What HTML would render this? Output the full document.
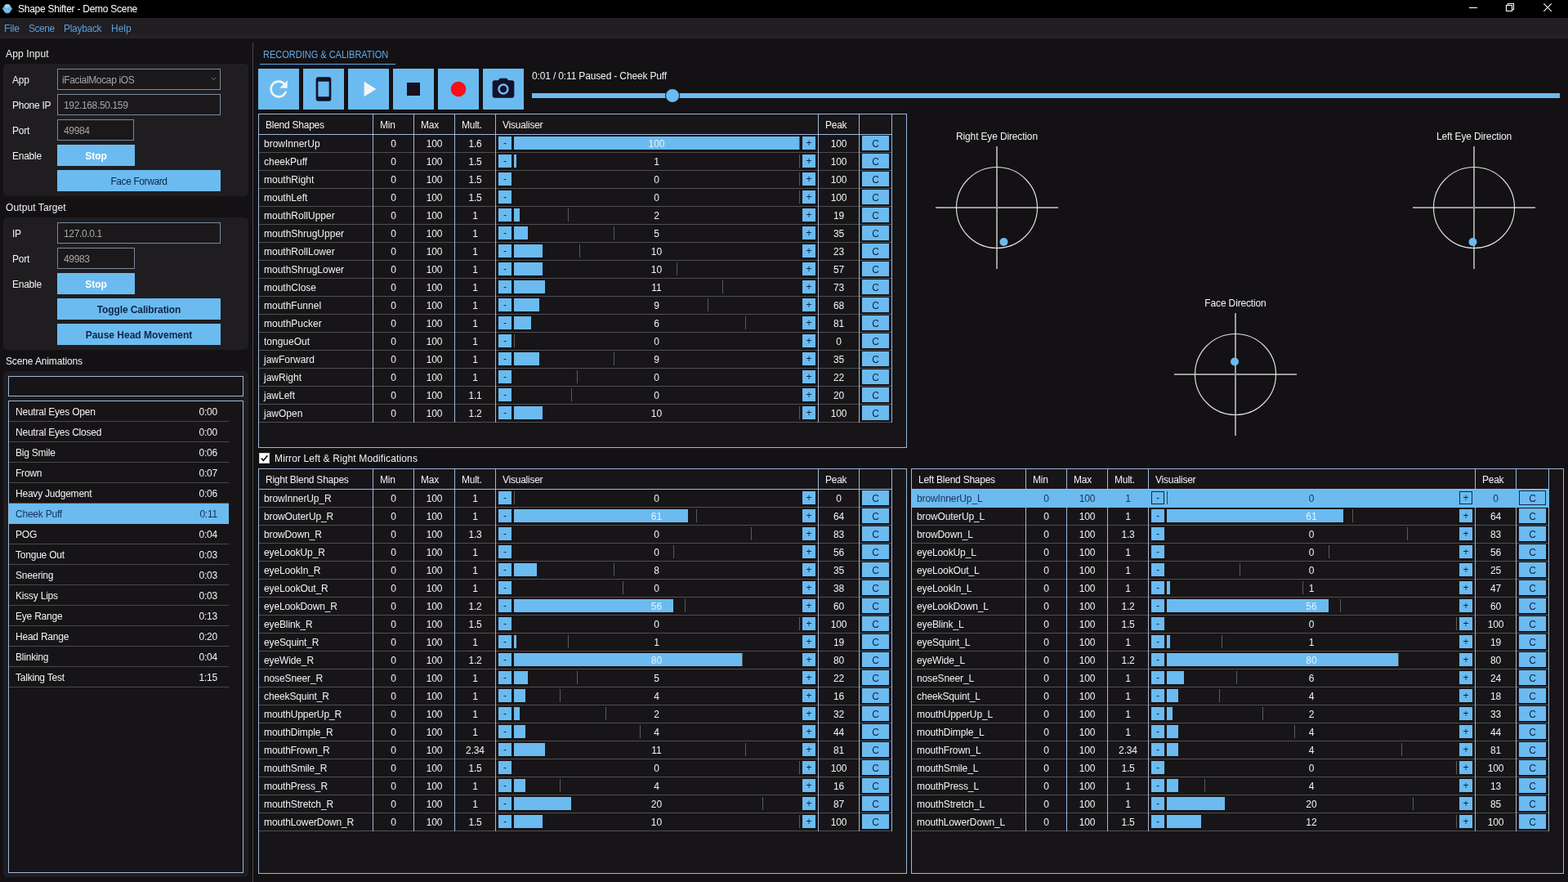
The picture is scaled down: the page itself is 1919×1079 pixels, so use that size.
<!DOCTYPE html>
<html lang="en"><head><meta charset="utf-8"><title>Shape Shifter - Demo Scene</title>
<style>
*{box-sizing:border-box;margin:0;padding:0}
html,body{width:1919px;height:1079px;overflow:hidden;background:#131114}
body{position:relative;font-family:"Liberation Sans",sans-serif;font-size:12px;color:#f2f2f2;line-height:14px}
#app{position:absolute;left:0;top:0;width:1919px;height:1079px;will-change:transform}
.abs{position:absolute}
div.t{position:absolute;white-space:nowrap;line-height:14px}
.panel{position:absolute;background:#1f1d20;border-radius:5px}
.inp{position:absolute;border:1px solid #7a899c;background:#1a181b;color:#a6a6a6;letter-spacing:-0.35px;line-height:26px;padding-left:7px;white-space:nowrap}
.btn{position:absolute;background:#6bbbf0;color:#10254a;text-align:center;line-height:28px;white-space:nowrap}
.btn.w{color:#fff;font-weight:bold}
.btn.bd{font-weight:bold}
.tb{position:absolute;top:84px;width:50px;height:50px;background:#6bbbf0}
.tb svg{position:absolute;left:9px;top:9px}
.grid{position:absolute;border:1px solid #9cb8db;background:#171518;overflow:hidden}
.hr,.r{display:flex;white-space:nowrap}
.hr{height:25px;border-bottom:1px solid #9cb8db;width:max-content}
.r{height:22px;width:max-content}
.c{border-right:1px solid #9cb8db;height:100%;flex:none;position:relative}
.hr .c{line-height:27px;padding-left:8px;letter-spacing:-0.25px}
.r .c{line-height:23px;text-align:center;box-shadow:inset 0 -1px 0 #4f4e51}
.sel .c{box-shadow:none!important}
.cn{width:140px}
.r .cn{text-align:left;padding-left:6px}
.c50{width:50px;letter-spacing:-0.15px}
.c40{width:40px}
.hr .c50{padding-left:8px}
.v b,.v i,.v span{position:absolute;top:2px;height:16px}
.v b{width:16px;background:#6bbbf0;color:#10254a;font-weight:normal;line-height:17px;text-align:center}
.m{left:3px}
.pl{right:3px}
.b{left:22px;background:#6bbbf0}
.p{width:1px;background:#5a5a5c}
.v span{left:22px;line-height:19px;text-align:center}
.v span.on{color:#e8f3fc}
.cb{position:absolute;left:3px;top:1px;width:33px;height:18px;background:#6bbbf0;color:#10254a;font-weight:normal;line-height:21px;text-align:center}
.sel{background:#6bbbf0;color:#173058}
.sel .c{border-right-color:#6bbbf0}
.sel .v b,.sel .cb{background:transparent;border:1px solid #14274a}
.sel .v b{line-height:15px}
.sel .cb{line-height:19px}
.sel .p{background:#2a4468}
.glabel{position:absolute;width:200px;text-align:center;line-height:16px;white-space:nowrap;letter-spacing:-0.15px}
.li{position:absolute;left:11px;width:269px;height:25px;border-bottom:1px solid #48484a;line-height:27px;white-space:nowrap;letter-spacing:-0.22px}
.li span{position:absolute;left:8px}
.li em{position:absolute;right:14px;font-style:normal}
.li.s{background:#6bbbf0;color:#173058;border-bottom-color:#6bbbf0}
</style></head><body><div id="app">
<div class="abs" style="left:0;top:0;width:1919px;height:22px;background:#000"></div>
<svg class="abs" style="left:2px;top:4px" width="14" height="13" viewBox="0 0 14 13"><defs><radialGradient id="ig" cx="0.45" cy="0.35" r="0.7"><stop offset="0" stop-color="#a8d8f4"/><stop offset="1" stop-color="#5aa9dc"/></radialGradient></defs><ellipse cx="7" cy="6.8" rx="5" ry="5.6" fill="url(#ig)"/><rect x="1" y="5.5" width="12" height="2.6" rx="1.3" fill="#6fb4df"/><rect x="4.3" y="1.6" width="5.4" height="1.2" fill="#d9eefb"/></svg>
<div class="t" style="left:22px;top:4px;color:#fff;letter-spacing:-0.26px">Shape Shifter - Demo Scene</div>
<svg class="abs" style="left:1790px;top:0" width="129" height="22" viewBox="0 0 129 22"><g stroke="#fff" stroke-width="1.1" fill="none"><path d="M8 9.5H18"/><path d="M53.5 6.5h7v7h-7z" /><path d="M55.5 6.5v-2h7v7h-2"/><path d="M99.3 4.3l9.5 9.5M108.8 4.3l-9.5 9.5"/></g></svg>
<div class="abs" style="left:0;top:22px;width:1919px;height:25px;background:#201e21"></div>
<div class="abs" style="left:0;top:42px;width:1919px;height:5px;background:#242225"></div>
<div class="t" style="left:5px;top:28px;color:#5a9fdc;letter-spacing:-0.1px">File</div>
<div class="t" style="left:35px;top:28px;color:#5a9fdc;letter-spacing:-0.45px">Scene</div>
<div class="t" style="left:78px;top:28px;color:#5a9fdc;letter-spacing:-0.3px">Playback</div>
<div class="t" style="left:136px;top:28px;color:#5a9fdc;letter-spacing:0px">Help</div>
<div class="t" style="left:7px;top:59px;letter-spacing:0.15px">App Input</div>
<div class="panel" style="left:4px;top:78px;width:300px;height:162px"></div>
<div class="t" style="left:15px;top:91px;letter-spacing:-0.25px">App</div>
<div class="t" style="left:15px;top:122px;letter-spacing:-0.25px">Phone IP</div>
<div class="t" style="left:15px;top:153px;letter-spacing:-0.25px">Port</div>
<div class="t" style="left:15px;top:184px;letter-spacing:-0.25px">Enable</div>
<div class="inp" style="left:70px;top:84px;width:200px;height:26px;padding-left:5px">iFacialMocap iOS<svg class="abs" style="left:187px;top:9px" width="7" height="5" viewBox="0 0 7 5"><path d="M0.8 0.8l2.7 3 2.7-3" stroke="#747478" fill="none" stroke-width="1"/></svg></div>
<div class="inp" style="left:70px;top:115px;width:200px;height:26px">192.168.50.159</div>
<div class="inp" style="left:70px;top:146px;width:94px;height:26px">49984</div>
<div class="btn w" style="left:70px;top:177px;width:95px;height:26px">Stop</div>
<div class="btn" style="left:70px;top:208px;width:200px;height:26px;letter-spacing:-0.4px">Face Forward</div>
<div class="t" style="left:7px;top:247px;letter-spacing:0.1px">Output Target</div>
<div class="panel" style="left:4px;top:266px;width:300px;height:162px"></div>
<div class="t" style="left:15px;top:279px;letter-spacing:-0.25px">IP</div>
<div class="t" style="left:15px;top:310px;letter-spacing:-0.25px">Port</div>
<div class="t" style="left:15px;top:341px;letter-spacing:-0.25px">Enable</div>
<div class="inp" style="left:70px;top:272px;width:200px;height:26px">127.0.0.1</div>
<div class="inp" style="left:70px;top:303px;width:95px;height:26px">49983</div>
<div class="btn w" style="left:70px;top:334px;width:95px;height:26px">Stop</div>
<div class="btn bd" style="left:70px;top:365px;width:200px;height:26px;letter-spacing:-0.11px">Toggle Calibration</div>
<div class="btn bd" style="left:70px;top:396px;width:200px;height:26px">Pause Head Movement</div>
<div class="t" style="left:7px;top:435px;letter-spacing:-0.13px">Scene Animations</div>
<div class="panel" style="left:4px;top:454px;width:300px;height:619px"></div>
<div class="abs" style="left:10px;top:460px;width:288px;height:25px;border:1px solid #9cb8db;background:#161417"></div>
<div class="abs" style="left:10px;top:490px;width:288px;height:578px;border:1px solid #9cb8db;background:#161417"></div>
<div class="li" style="top:491px"><span>Neutral Eyes Open</span><em>0:00</em></div>
<div class="li" style="top:516px"><span>Neutral Eyes Closed</span><em>0:00</em></div>
<div class="li" style="top:541px"><span>Big Smile</span><em>0:06</em></div>
<div class="li" style="top:566px"><span>Frown</span><em>0:07</em></div>
<div class="li" style="top:591px"><span>Heavy Judgement</span><em>0:06</em></div>
<div class="li s" style="top:616px"><span>Cheek Puff</span><em>0:11</em></div>
<div class="li" style="top:641px"><span>POG</span><em>0:04</em></div>
<div class="li" style="top:666px"><span>Tongue Out</span><em>0:03</em></div>
<div class="li" style="top:691px"><span>Sneering</span><em>0:03</em></div>
<div class="li" style="top:716px"><span>Kissy Lips</span><em>0:03</em></div>
<div class="li" style="top:741px"><span>Eye Range</span><em>0:13</em></div>
<div class="li" style="top:766px"><span>Head Range</span><em>0:20</em></div>
<div class="li" style="top:791px"><span>Blinking</span><em>0:04</em></div>
<div class="li" style="top:816px"><span>Talking Test</span><em>1:15</em></div>
<div class="abs" style="left:309px;top:52px;width:1px;height:1027px;background:#47474a"></div>
<div class="t" style="left:322px;top:60px;color:#62abe8;font-size:12.6px;transform:scaleX(0.873);transform-origin:0 0">RECORDING &amp; CALIBRATION</div>
<div class="abs" style="left:318px;top:78px;width:166px;height:1px;background:#62abe8"></div>
<div class="tb" style="left:316px"><svg width="32" height="32" viewBox="0 0 24 24"><path fill="#f4f4f4" d="M17.65 6.35C16.2 4.9 14.21 4 12 4c-4.42 0-7.99 3.58-7.99 8s3.57 8 7.99 8c3.73 0 6.84-2.55 7.73-6h-2.08c-.82 2.33-3.04 4-5.65 4-3.31 0-6-2.69-6-6s2.69-6 6-6c1.66 0 3.14.69 4.22 1.78L13 11h7V4l-2.35 2.35z"/></svg></div>
<div class="tb" style="left:371px"><svg width="32" height="32" viewBox="0 0 24 24"><path fill="#15102a" d="M17 1.01L7 1c-1.1 0-2 .9-2 2v18c0 1.1.9 2 2 2h10c1.1 0 2-.9 2-2V3c0-1.1-.9-1.99-2-1.99zM17 19H7V5h10v14z"/></svg></div>
<div class="tb" style="left:426px"><svg width="32" height="32" viewBox="0 0 24 24"><path fill="#f4f4f4" d="M8 5v14l11-7z"/></svg></div>
<div class="tb" style="left:481px"><svg width="32" height="32" viewBox="0 0 24 24"><path fill="#17101f" d="M6 6h12v12H6z"/></svg></div>
<div class="tb" style="left:536px"><svg width="32" height="32" viewBox="0 0 24 24"><circle cx="12" cy="12" r="7" fill="#ff0d14"/></svg></div>
<div class="tb" style="left:591px"><svg width="32" height="32" viewBox="0 0 24 24"><circle cx="12" cy="12" r="3.2" fill="#15102a"/><path fill="#15102a" d="M9 2L7.17 4H4c-1.1 0-2 .9-2 2v12c0 1.1.9 2 2 2h16c1.1 0 2-.9 2-2V6c0-1.1-.9-2-2-2h-3.17L15 2H9zm3 15c-2.76 0-5-2.24-5-5s2.24-5 5-5 5 2.24 5 5-2.24 5-5 5z"/></svg></div>
<div class="t" style="left:651px;top:86px;letter-spacing:-0.15px">0:01 / 0:11 Paused - Cheek Puff</div>
<div class="abs" style="left:651px;top:114px;width:1258px;height:6px;background:#6bbbf0"></div>
<div class="abs" style="left:814px;top:108px;width:18px;height:18px;border-radius:9px;background:#6bbbf0;border:1px solid #131114"></div>
<div class="grid" style="left:316px;top:139px;width:794px;height:409px">
<div class="hr"><div class="c cn">Blend Shapes</div><div class="c c50">Min</div><div class="c c50">Max</div><div class="c c50">Mult.</div><div class="c" style="width:395px">Visualiser</div><div class="c c50">Peak</div><div class="c c40"></div></div>
<div class="r"><div class="c cn">browInnerUp</div><div class="c c50">0</div><div class="c c50">100</div><div class="c c50">1.6</div><div class="c v" style="width:395px"><b class="m">-</b><i class="b" style="width:349px"></i><i class="p" style="left:371px"></i><span class="on" style="width:349px">100</span><b class="pl">+</b></div><div class="c c50">100</div><div class="c c40"><b class="cb">C</b></div></div>
<div class="r"><div class="c cn">cheekPuff</div><div class="c c50">0</div><div class="c c50">100</div><div class="c c50">1.5</div><div class="c v" style="width:395px"><b class="m">-</b><i class="b" style="width:3.49px"></i><i class="p" style="left:371px"></i><span style="width:349px">1</span><b class="pl">+</b></div><div class="c c50">100</div><div class="c c40"><b class="cb">C</b></div></div>
<div class="r"><div class="c cn">mouthRight</div><div class="c c50">0</div><div class="c c50">100</div><div class="c c50">1.5</div><div class="c v" style="width:395px"><b class="m">-</b><i class="p" style="left:371px"></i><span style="width:349px">0</span><b class="pl">+</b></div><div class="c c50">100</div><div class="c c40"><b class="cb">C</b></div></div>
<div class="r"><div class="c cn">mouthLeft</div><div class="c c50">0</div><div class="c c50">100</div><div class="c c50">1.5</div><div class="c v" style="width:395px"><b class="m">-</b><i class="p" style="left:371px"></i><span style="width:349px">0</span><b class="pl">+</b></div><div class="c c50">100</div><div class="c c40"><b class="cb">C</b></div></div>
<div class="r"><div class="c cn">mouthRollUpper</div><div class="c c50">0</div><div class="c c50">100</div><div class="c c50">1</div><div class="c v" style="width:395px"><b class="m">-</b><i class="b" style="width:6.98px"></i><i class="p" style="left:88.31px"></i><span style="width:349px">2</span><b class="pl">+</b></div><div class="c c50">19</div><div class="c c40"><b class="cb">C</b></div></div>
<div class="r"><div class="c cn">mouthShrugUpper</div><div class="c c50">0</div><div class="c c50">100</div><div class="c c50">1</div><div class="c v" style="width:395px"><b class="m">-</b><i class="b" style="width:17.45px"></i><i class="p" style="left:144.15px"></i><span style="width:349px">5</span><b class="pl">+</b></div><div class="c c50">35</div><div class="c c40"><b class="cb">C</b></div></div>
<div class="r"><div class="c cn">mouthRollLower</div><div class="c c50">0</div><div class="c c50">100</div><div class="c c50">1</div><div class="c v" style="width:395px"><b class="m">-</b><i class="b" style="width:34.9px"></i><i class="p" style="left:102.27px"></i><span style="width:349px">10</span><b class="pl">+</b></div><div class="c c50">23</div><div class="c c40"><b class="cb">C</b></div></div>
<div class="r"><div class="c cn">mouthShrugLower</div><div class="c c50">0</div><div class="c c50">100</div><div class="c c50">1</div><div class="c v" style="width:395px"><b class="m">-</b><i class="b" style="width:34.9px"></i><i class="p" style="left:220.93px"></i><span style="width:349px">10</span><b class="pl">+</b></div><div class="c c50">57</div><div class="c c40"><b class="cb">C</b></div></div>
<div class="r"><div class="c cn">mouthClose</div><div class="c c50">0</div><div class="c c50">100</div><div class="c c50">1</div><div class="c v" style="width:395px"><b class="m">-</b><i class="b" style="width:38.39px"></i><i class="p" style="left:276.77px"></i><span style="width:349px">11</span><b class="pl">+</b></div><div class="c c50">73</div><div class="c c40"><b class="cb">C</b></div></div>
<div class="r"><div class="c cn">mouthFunnel</div><div class="c c50">0</div><div class="c c50">100</div><div class="c c50">1</div><div class="c v" style="width:395px"><b class="m">-</b><i class="b" style="width:31.41px"></i><i class="p" style="left:259.32px"></i><span style="width:349px">9</span><b class="pl">+</b></div><div class="c c50">68</div><div class="c c40"><b class="cb">C</b></div></div>
<div class="r"><div class="c cn">mouthPucker</div><div class="c c50">0</div><div class="c c50">100</div><div class="c c50">1</div><div class="c v" style="width:395px"><b class="m">-</b><i class="b" style="width:20.94px"></i><i class="p" style="left:304.69px"></i><span style="width:349px">6</span><b class="pl">+</b></div><div class="c c50">81</div><div class="c c40"><b class="cb">C</b></div></div>
<div class="r"><div class="c cn">tongueOut</div><div class="c c50">0</div><div class="c c50">100</div><div class="c c50">1</div><div class="c v" style="width:395px"><b class="m">-</b><i class="p" style="left:22px"></i><span style="width:349px">0</span><b class="pl">+</b></div><div class="c c50">0</div><div class="c c40"><b class="cb">C</b></div></div>
<div class="r"><div class="c cn">jawForward</div><div class="c c50">0</div><div class="c c50">100</div><div class="c c50">1</div><div class="c v" style="width:395px"><b class="m">-</b><i class="b" style="width:31.41px"></i><i class="p" style="left:144.15px"></i><span style="width:349px">9</span><b class="pl">+</b></div><div class="c c50">35</div><div class="c c40"><b class="cb">C</b></div></div>
<div class="r"><div class="c cn">jawRight</div><div class="c c50">0</div><div class="c c50">100</div><div class="c c50">1</div><div class="c v" style="width:395px"><b class="m">-</b><i class="p" style="left:98.78px"></i><span style="width:349px">0</span><b class="pl">+</b></div><div class="c c50">22</div><div class="c c40"><b class="cb">C</b></div></div>
<div class="r"><div class="c cn">jawLeft</div><div class="c c50">0</div><div class="c c50">100</div><div class="c c50">1.1</div><div class="c v" style="width:395px"><b class="m">-</b><i class="p" style="left:91.8px"></i><span style="width:349px">0</span><b class="pl">+</b></div><div class="c c50">20</div><div class="c c40"><b class="cb">C</b></div></div>
<div class="r"><div class="c cn">jawOpen</div><div class="c c50">0</div><div class="c c50">100</div><div class="c c50">1.2</div><div class="c v" style="width:395px"><b class="m">-</b><i class="b" style="width:34.9px"></i><i class="p" style="left:371px"></i><span style="width:349px">10</span><b class="pl">+</b></div><div class="c c50">100</div><div class="c c40"><b class="cb">C</b></div></div>
</div>
<div class="abs" style="left:317px;top:554px;width:13px;height:13px;background:#fff;border:1px solid #cfcfcf"><svg class="abs" style="left:0;top:0" width="11" height="11" viewBox="0 0 11 11"><path d="M1.8 5.6l2.6 2.8L9.4 2.2" stroke="#15151a" stroke-width="1.7" fill="none"/></svg></div>
<div class="t" style="left:336px;top:554px;letter-spacing:0.13px">Mirror Left &amp; Right Modifications</div>
<div class="grid" style="left:316px;top:573px;width:794px;height:496px">
<div class="hr"><div class="c cn">Right Blend Shapes</div><div class="c c50">Min</div><div class="c c50">Max</div><div class="c c50">Mult.</div><div class="c" style="width:395px">Visualiser</div><div class="c c50">Peak</div><div class="c c40"></div></div>
<div class="r"><div class="c cn" style="letter-spacing:-0.12px">browInnerUp_R</div><div class="c c50">0</div><div class="c c50">100</div><div class="c c50">1</div><div class="c v" style="width:395px"><b class="m">-</b><i class="p" style="left:22px"></i><span style="width:349px">0</span><b class="pl">+</b></div><div class="c c50">0</div><div class="c c40"><b class="cb">C</b></div></div>
<div class="r"><div class="c cn" style="letter-spacing:-0.12px">browOuterUp_R</div><div class="c c50">0</div><div class="c c50">100</div><div class="c c50">1</div><div class="c v" style="width:395px"><b class="m">-</b><i class="b" style="width:212.89px"></i><i class="p" style="left:245.36px"></i><span class="on" style="width:349px">61</span><b class="pl">+</b></div><div class="c c50">64</div><div class="c c40"><b class="cb">C</b></div></div>
<div class="r"><div class="c cn" style="letter-spacing:-0.12px">browDown_R</div><div class="c c50">0</div><div class="c c50">100</div><div class="c c50">1.3</div><div class="c v" style="width:395px"><b class="m">-</b><i class="p" style="left:311.67px"></i><span style="width:349px">0</span><b class="pl">+</b></div><div class="c c50">83</div><div class="c c40"><b class="cb">C</b></div></div>
<div class="r"><div class="c cn" style="letter-spacing:-0.12px">eyeLookUp_R</div><div class="c c50">0</div><div class="c c50">100</div><div class="c c50">1</div><div class="c v" style="width:395px"><b class="m">-</b><i class="p" style="left:217.44px"></i><span style="width:349px">0</span><b class="pl">+</b></div><div class="c c50">56</div><div class="c c40"><b class="cb">C</b></div></div>
<div class="r"><div class="c cn" style="letter-spacing:-0.12px">eyeLookIn_R</div><div class="c c50">0</div><div class="c c50">100</div><div class="c c50">1</div><div class="c v" style="width:395px"><b class="m">-</b><i class="b" style="width:27.92px"></i><i class="p" style="left:144.15px"></i><span style="width:349px">8</span><b class="pl">+</b></div><div class="c c50">35</div><div class="c c40"><b class="cb">C</b></div></div>
<div class="r"><div class="c cn" style="letter-spacing:-0.12px">eyeLookOut_R</div><div class="c c50">0</div><div class="c c50">100</div><div class="c c50">1</div><div class="c v" style="width:395px"><b class="m">-</b><i class="p" style="left:154.62px"></i><span style="width:349px">0</span><b class="pl">+</b></div><div class="c c50">38</div><div class="c c40"><b class="cb">C</b></div></div>
<div class="r"><div class="c cn" style="letter-spacing:-0.12px">eyeLookDown_R</div><div class="c c50">0</div><div class="c c50">100</div><div class="c c50">1.2</div><div class="c v" style="width:395px"><b class="m">-</b><i class="b" style="width:195.44px"></i><i class="p" style="left:231.4px"></i><span class="on" style="width:349px">56</span><b class="pl">+</b></div><div class="c c50">60</div><div class="c c40"><b class="cb">C</b></div></div>
<div class="r"><div class="c cn" style="letter-spacing:-0.12px">eyeBlink_R</div><div class="c c50">0</div><div class="c c50">100</div><div class="c c50">1.5</div><div class="c v" style="width:395px"><b class="m">-</b><i class="p" style="left:371px"></i><span style="width:349px">0</span><b class="pl">+</b></div><div class="c c50">100</div><div class="c c40"><b class="cb">C</b></div></div>
<div class="r"><div class="c cn" style="letter-spacing:-0.12px">eyeSquint_R</div><div class="c c50">0</div><div class="c c50">100</div><div class="c c50">1</div><div class="c v" style="width:395px"><b class="m">-</b><i class="b" style="width:3.49px"></i><i class="p" style="left:88.31px"></i><span style="width:349px">1</span><b class="pl">+</b></div><div class="c c50">19</div><div class="c c40"><b class="cb">C</b></div></div>
<div class="r"><div class="c cn" style="letter-spacing:-0.12px">eyeWide_R</div><div class="c c50">0</div><div class="c c50">100</div><div class="c c50">1.2</div><div class="c v" style="width:395px"><b class="m">-</b><i class="b" style="width:279.2px"></i><i class="p" style="left:301.2px"></i><span class="on" style="width:349px">80</span><b class="pl">+</b></div><div class="c c50">80</div><div class="c c40"><b class="cb">C</b></div></div>
<div class="r"><div class="c cn" style="letter-spacing:-0.12px">noseSneer_R</div><div class="c c50">0</div><div class="c c50">100</div><div class="c c50">1</div><div class="c v" style="width:395px"><b class="m">-</b><i class="b" style="width:17.45px"></i><i class="p" style="left:98.78px"></i><span style="width:349px">5</span><b class="pl">+</b></div><div class="c c50">22</div><div class="c c40"><b class="cb">C</b></div></div>
<div class="r"><div class="c cn" style="letter-spacing:-0.12px">cheekSquint_R</div><div class="c c50">0</div><div class="c c50">100</div><div class="c c50">1</div><div class="c v" style="width:395px"><b class="m">-</b><i class="b" style="width:13.96px"></i><i class="p" style="left:77.84px"></i><span style="width:349px">4</span><b class="pl">+</b></div><div class="c c50">16</div><div class="c c40"><b class="cb">C</b></div></div>
<div class="r"><div class="c cn" style="letter-spacing:-0.12px">mouthUpperUp_R</div><div class="c c50">0</div><div class="c c50">100</div><div class="c c50">1</div><div class="c v" style="width:395px"><b class="m">-</b><i class="b" style="width:6.98px"></i><i class="p" style="left:133.68px"></i><span style="width:349px">2</span><b class="pl">+</b></div><div class="c c50">32</div><div class="c c40"><b class="cb">C</b></div></div>
<div class="r"><div class="c cn" style="letter-spacing:-0.12px">mouthDimple_R</div><div class="c c50">0</div><div class="c c50">100</div><div class="c c50">1</div><div class="c v" style="width:395px"><b class="m">-</b><i class="b" style="width:13.96px"></i><i class="p" style="left:175.56px"></i><span style="width:349px">4</span><b class="pl">+</b></div><div class="c c50">44</div><div class="c c40"><b class="cb">C</b></div></div>
<div class="r"><div class="c cn" style="letter-spacing:-0.12px">mouthFrown_R</div><div class="c c50">0</div><div class="c c50">100</div><div class="c c50">2.34</div><div class="c v" style="width:395px"><b class="m">-</b><i class="b" style="width:38.39px"></i><i class="p" style="left:304.69px"></i><span style="width:349px">11</span><b class="pl">+</b></div><div class="c c50">81</div><div class="c c40"><b class="cb">C</b></div></div>
<div class="r"><div class="c cn" style="letter-spacing:-0.12px">mouthSmile_R</div><div class="c c50">0</div><div class="c c50">100</div><div class="c c50">1.5</div><div class="c v" style="width:395px"><b class="m">-</b><i class="p" style="left:371px"></i><span style="width:349px">0</span><b class="pl">+</b></div><div class="c c50">100</div><div class="c c40"><b class="cb">C</b></div></div>
<div class="r"><div class="c cn" style="letter-spacing:-0.12px">mouthPress_R</div><div class="c c50">0</div><div class="c c50">100</div><div class="c c50">1</div><div class="c v" style="width:395px"><b class="m">-</b><i class="b" style="width:13.96px"></i><i class="p" style="left:77.84px"></i><span style="width:349px">4</span><b class="pl">+</b></div><div class="c c50">16</div><div class="c c40"><b class="cb">C</b></div></div>
<div class="r"><div class="c cn" style="letter-spacing:-0.12px">mouthStretch_R</div><div class="c c50">0</div><div class="c c50">100</div><div class="c c50">1</div><div class="c v" style="width:395px"><b class="m">-</b><i class="b" style="width:69.8px"></i><i class="p" style="left:325.63px"></i><span style="width:349px">20</span><b class="pl">+</b></div><div class="c c50">87</div><div class="c c40"><b class="cb">C</b></div></div>
<div class="r"><div class="c cn" style="letter-spacing:-0.12px">mouthLowerDown_R</div><div class="c c50">0</div><div class="c c50">100</div><div class="c c50">1.5</div><div class="c v" style="width:395px"><b class="m">-</b><i class="b" style="width:34.9px"></i><i class="p" style="left:371px"></i><span style="width:349px">10</span><b class="pl">+</b></div><div class="c c50">100</div><div class="c c40"><b class="cb">C</b></div></div>
</div>
<div class="grid" style="left:1115px;top:573px;width:799px;height:496px">
<div class="hr"><div class="c cn">Left Blend Shapes</div><div class="c c50">Min</div><div class="c c50">Max</div><div class="c c50">Mult.</div><div class="c" style="width:400px">Visualiser</div><div class="c c50">Peak</div><div class="c c40"></div></div>
<div class="r sel"><div class="c cn" style="letter-spacing:-0.12px">browInnerUp_L</div><div class="c c50">0</div><div class="c c50">100</div><div class="c c50">1</div><div class="c v" style="width:400px"><b class="m">-</b><i class="p" style="left:22px"></i><span style="width:354px">0</span><b class="pl">+</b></div><div class="c c50">0</div><div class="c c40"><b class="cb">C</b></div></div>
<div class="r"><div class="c cn" style="letter-spacing:-0.12px">browOuterUp_L</div><div class="c c50">0</div><div class="c c50">100</div><div class="c c50">1</div><div class="c v" style="width:400px"><b class="m">-</b><i class="b" style="width:215.94px"></i><i class="p" style="left:248.56px"></i><span class="on" style="width:354px">61</span><b class="pl">+</b></div><div class="c c50">64</div><div class="c c40"><b class="cb">C</b></div></div>
<div class="r"><div class="c cn" style="letter-spacing:-0.12px">browDown_L</div><div class="c c50">0</div><div class="c c50">100</div><div class="c c50">1.3</div><div class="c v" style="width:400px"><b class="m">-</b><i class="p" style="left:315.82px"></i><span style="width:354px">0</span><b class="pl">+</b></div><div class="c c50">83</div><div class="c c40"><b class="cb">C</b></div></div>
<div class="r"><div class="c cn" style="letter-spacing:-0.12px">eyeLookUp_L</div><div class="c c50">0</div><div class="c c50">100</div><div class="c c50">1</div><div class="c v" style="width:400px"><b class="m">-</b><i class="p" style="left:220.24px"></i><span style="width:354px">0</span><b class="pl">+</b></div><div class="c c50">56</div><div class="c c40"><b class="cb">C</b></div></div>
<div class="r"><div class="c cn" style="letter-spacing:-0.12px">eyeLookOut_L</div><div class="c c50">0</div><div class="c c50">100</div><div class="c c50">1</div><div class="c v" style="width:400px"><b class="m">-</b><i class="p" style="left:110.5px"></i><span style="width:354px">0</span><b class="pl">+</b></div><div class="c c50">25</div><div class="c c40"><b class="cb">C</b></div></div>
<div class="r"><div class="c cn" style="letter-spacing:-0.12px">eyeLookIn_L</div><div class="c c50">0</div><div class="c c50">100</div><div class="c c50">1</div><div class="c v" style="width:400px"><b class="m">-</b><i class="b" style="width:3.54px"></i><i class="p" style="left:188.38px"></i><span style="width:354px">1</span><b class="pl">+</b></div><div class="c c50">47</div><div class="c c40"><b class="cb">C</b></div></div>
<div class="r"><div class="c cn" style="letter-spacing:-0.12px">eyeLookDown_L</div><div class="c c50">0</div><div class="c c50">100</div><div class="c c50">1.2</div><div class="c v" style="width:400px"><b class="m">-</b><i class="b" style="width:198.24px"></i><i class="p" style="left:234.4px"></i><span class="on" style="width:354px">56</span><b class="pl">+</b></div><div class="c c50">60</div><div class="c c40"><b class="cb">C</b></div></div>
<div class="r"><div class="c cn" style="letter-spacing:-0.12px">eyeBlink_L</div><div class="c c50">0</div><div class="c c50">100</div><div class="c c50">1.5</div><div class="c v" style="width:400px"><b class="m">-</b><i class="p" style="left:376px"></i><span style="width:354px">0</span><b class="pl">+</b></div><div class="c c50">100</div><div class="c c40"><b class="cb">C</b></div></div>
<div class="r"><div class="c cn" style="letter-spacing:-0.12px">eyeSquint_L</div><div class="c c50">0</div><div class="c c50">100</div><div class="c c50">1</div><div class="c v" style="width:400px"><b class="m">-</b><i class="b" style="width:3.54px"></i><i class="p" style="left:89.26px"></i><span style="width:354px">1</span><b class="pl">+</b></div><div class="c c50">19</div><div class="c c40"><b class="cb">C</b></div></div>
<div class="r"><div class="c cn" style="letter-spacing:-0.12px">eyeWide_L</div><div class="c c50">0</div><div class="c c50">100</div><div class="c c50">1.2</div><div class="c v" style="width:400px"><b class="m">-</b><i class="b" style="width:283.2px"></i><i class="p" style="left:305.2px"></i><span class="on" style="width:354px">80</span><b class="pl">+</b></div><div class="c c50">80</div><div class="c c40"><b class="cb">C</b></div></div>
<div class="r"><div class="c cn" style="letter-spacing:-0.12px">noseSneer_L</div><div class="c c50">0</div><div class="c c50">100</div><div class="c c50">1</div><div class="c v" style="width:400px"><b class="m">-</b><i class="b" style="width:21.24px"></i><i class="p" style="left:106.96px"></i><span style="width:354px">6</span><b class="pl">+</b></div><div class="c c50">24</div><div class="c c40"><b class="cb">C</b></div></div>
<div class="r"><div class="c cn" style="letter-spacing:-0.12px">cheekSquint_L</div><div class="c c50">0</div><div class="c c50">100</div><div class="c c50">1</div><div class="c v" style="width:400px"><b class="m">-</b><i class="b" style="width:14.16px"></i><i class="p" style="left:85.72px"></i><span style="width:354px">4</span><b class="pl">+</b></div><div class="c c50">18</div><div class="c c40"><b class="cb">C</b></div></div>
<div class="r"><div class="c cn" style="letter-spacing:-0.12px">mouthUpperUp_L</div><div class="c c50">0</div><div class="c c50">100</div><div class="c c50">1</div><div class="c v" style="width:400px"><b class="m">-</b><i class="b" style="width:7.08px"></i><i class="p" style="left:138.82px"></i><span style="width:354px">2</span><b class="pl">+</b></div><div class="c c50">33</div><div class="c c40"><b class="cb">C</b></div></div>
<div class="r"><div class="c cn" style="letter-spacing:-0.12px">mouthDimple_L</div><div class="c c50">0</div><div class="c c50">100</div><div class="c c50">1</div><div class="c v" style="width:400px"><b class="m">-</b><i class="b" style="width:14.16px"></i><i class="p" style="left:177.76px"></i><span style="width:354px">4</span><b class="pl">+</b></div><div class="c c50">44</div><div class="c c40"><b class="cb">C</b></div></div>
<div class="r"><div class="c cn" style="letter-spacing:-0.12px">mouthFrown_L</div><div class="c c50">0</div><div class="c c50">100</div><div class="c c50">2.34</div><div class="c v" style="width:400px"><b class="m">-</b><i class="b" style="width:14.16px"></i><i class="p" style="left:308.74px"></i><span style="width:354px">4</span><b class="pl">+</b></div><div class="c c50">81</div><div class="c c40"><b class="cb">C</b></div></div>
<div class="r"><div class="c cn" style="letter-spacing:-0.12px">mouthSmile_L</div><div class="c c50">0</div><div class="c c50">100</div><div class="c c50">1.5</div><div class="c v" style="width:400px"><b class="m">-</b><i class="p" style="left:376px"></i><span style="width:354px">0</span><b class="pl">+</b></div><div class="c c50">100</div><div class="c c40"><b class="cb">C</b></div></div>
<div class="r"><div class="c cn" style="letter-spacing:-0.12px">mouthPress_L</div><div class="c c50">0</div><div class="c c50">100</div><div class="c c50">1</div><div class="c v" style="width:400px"><b class="m">-</b><i class="b" style="width:14.16px"></i><i class="p" style="left:68.02px"></i><span style="width:354px">4</span><b class="pl">+</b></div><div class="c c50">13</div><div class="c c40"><b class="cb">C</b></div></div>
<div class="r"><div class="c cn" style="letter-spacing:-0.12px">mouthStretch_L</div><div class="c c50">0</div><div class="c c50">100</div><div class="c c50">1</div><div class="c v" style="width:400px"><b class="m">-</b><i class="b" style="width:70.8px"></i><i class="p" style="left:322.9px"></i><span style="width:354px">20</span><b class="pl">+</b></div><div class="c c50">85</div><div class="c c40"><b class="cb">C</b></div></div>
<div class="r"><div class="c cn" style="letter-spacing:-0.12px">mouthLowerDown_L</div><div class="c c50">0</div><div class="c c50">100</div><div class="c c50">1.5</div><div class="c v" style="width:400px"><b class="m">-</b><i class="b" style="width:42.48px"></i><i class="p" style="left:376px"></i><span style="width:354px">12</span><b class="pl">+</b></div><div class="c c50">100</div><div class="c c40"><b class="cb">C</b></div></div>
</div>
<div class="glabel" style="left:1120px;top:159px">Right Eye Direction</div><svg class="abs" style="left:1144px;top:178px" width="152" height="152" viewBox="-76 -76 152 152"><line x1="-75" y1="0" x2="75" y2="0" stroke="#9c9c9c" stroke-width="2"/><line x1="0" y1="-75" x2="0" y2="75" stroke="#9c9c9c" stroke-width="2"/><circle cx="0" cy="0" r="49.5" fill="none" stroke="#e2e2e2" stroke-width="1.15"/><circle cx="8.5" cy="42" r="5" fill="#6bbbf0"/></svg>
<div class="glabel" style="left:1704px;top:159px">Left Eye Direction</div><svg class="abs" style="left:1728px;top:178px" width="152" height="152" viewBox="-76 -76 152 152"><line x1="-75" y1="0" x2="75" y2="0" stroke="#9c9c9c" stroke-width="2"/><line x1="0" y1="-75" x2="0" y2="75" stroke="#9c9c9c" stroke-width="2"/><circle cx="0" cy="0" r="49.5" fill="none" stroke="#e2e2e2" stroke-width="1.15"/><circle cx="-1.5" cy="42" r="5" fill="#6bbbf0"/></svg>
<div class="glabel" style="left:1412px;top:363px">Face Direction</div><svg class="abs" style="left:1436px;top:382px" width="152" height="152" viewBox="-76 -76 152 152"><line x1="-75" y1="0" x2="75" y2="0" stroke="#9c9c9c" stroke-width="2"/><line x1="0" y1="-75" x2="0" y2="75" stroke="#9c9c9c" stroke-width="2"/><circle cx="0" cy="0" r="49.5" fill="none" stroke="#e2e2e2" stroke-width="1.15"/><circle cx="-1" cy="-15.5" r="5" fill="#6bbbf0"/></svg>
</div></body></html>
